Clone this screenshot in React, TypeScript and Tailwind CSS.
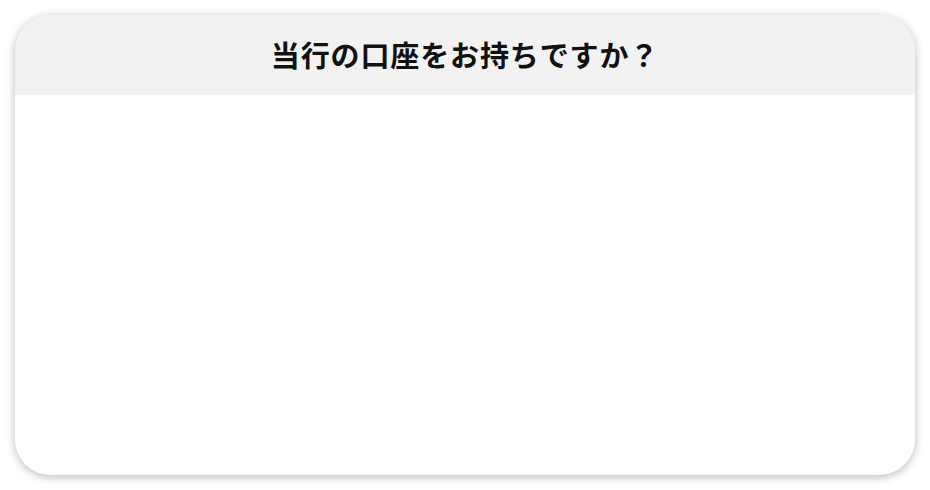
import React from 'react';

export default function App() {
  return (
    <div className="w-[930px] h-[490px] bg-white p-[15px]">
      <div className="h-full w-full rounded-[36px] bg-white overflow-hidden shadow-[0_2px_10px_rgba(0,0,0,0.28)] flex flex-col">
        <div className="h-[80px] bg-[#f2f2f2] flex items-center justify-center pb-[2px]">
          <h1
            className="text-[29px] leading-none font-bold text-[#111] tracking-[0.03em]"
            style={{ fontFamily: '"Noto Sans CJK JP", "Noto Sans", sans-serif' }}
          >
            当行の口座をお持ちですか？
          </h1>
        </div>
        <div className="flex-1 bg-white" />
      </div>
    </div>
  );
}
